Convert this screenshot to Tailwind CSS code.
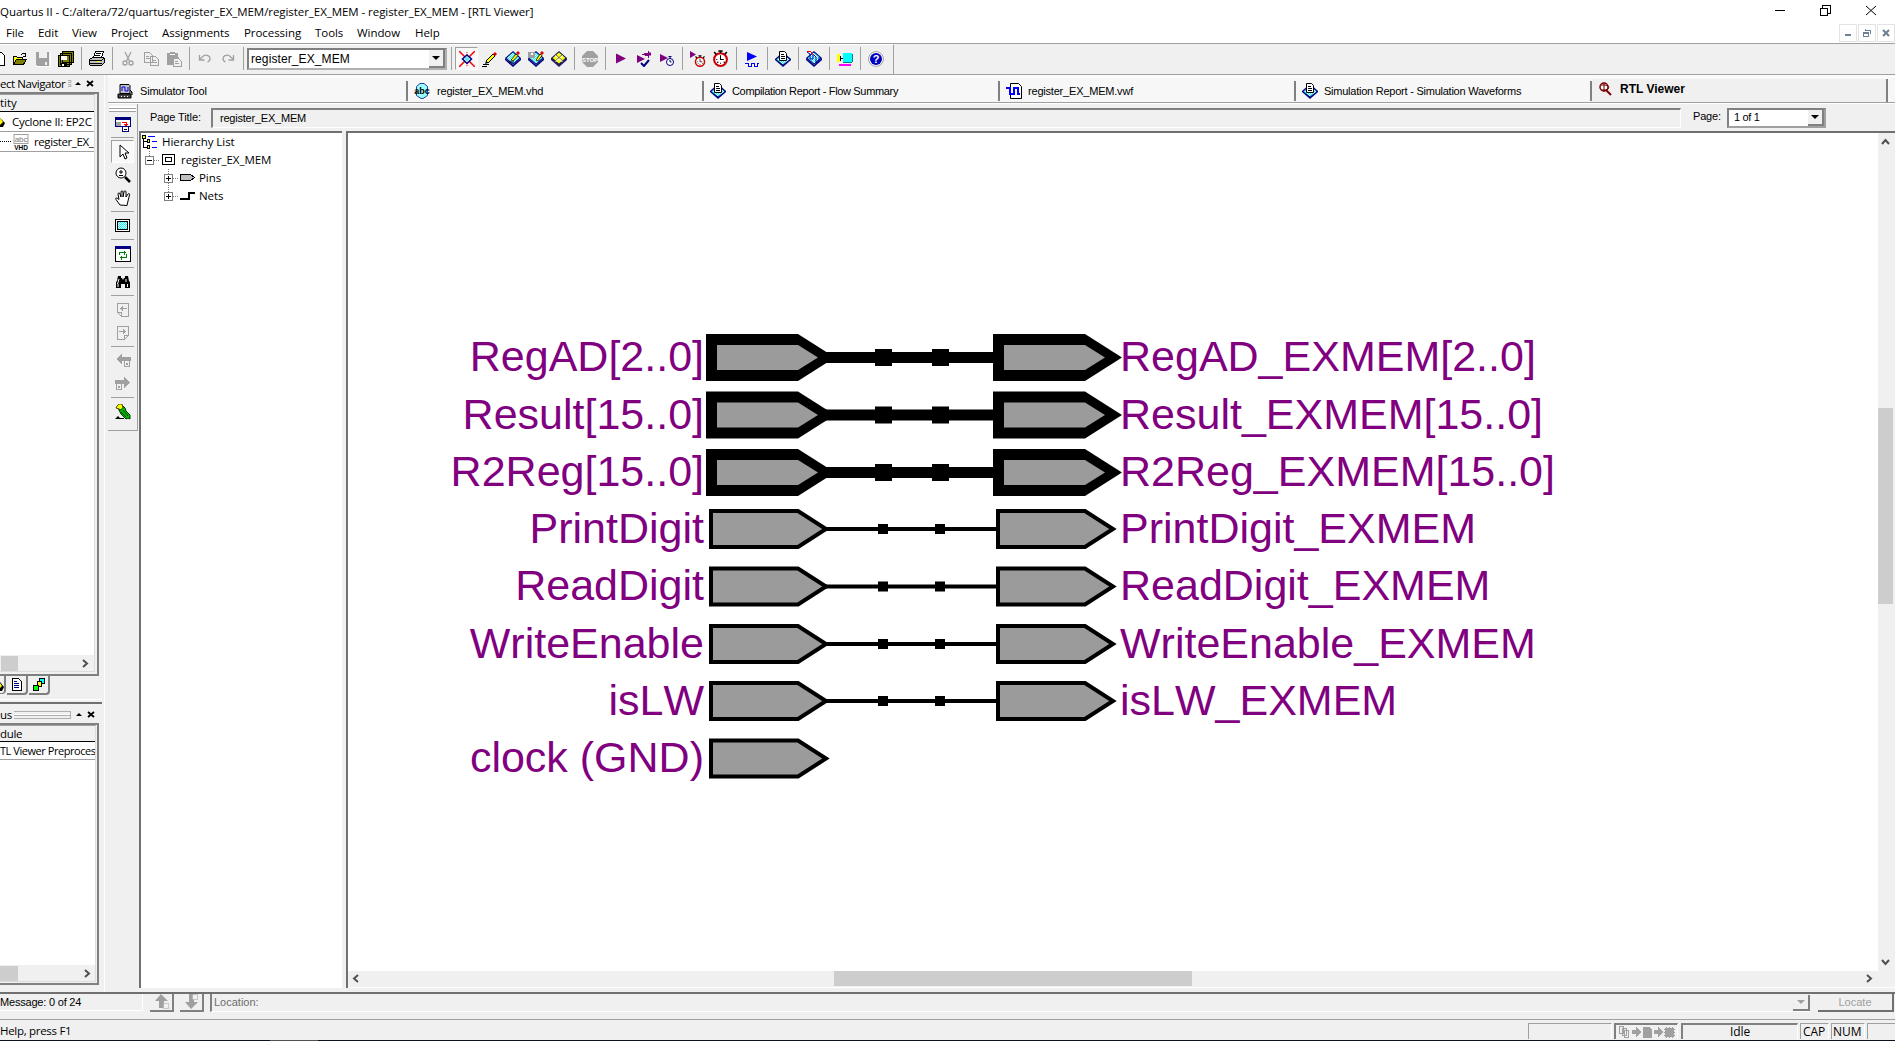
<!DOCTYPE html>
<html lang="en">
<head>
<meta charset="utf-8">
<title>Quartus II - RTL Viewer</title>
<script src="https://cdn.jsdelivr.net/npm/@tailwindcss/browser@4"></script>
</head>
<body class="bg-white">
<svg width="0" height="0" class="absolute">
  <defs>
    <pattern id="dots" width="2" height="2" patternUnits="userSpaceOnUse"><rect width="2" height="2" fill="#fff"/><rect width="1" height="1" fill="#0ff"/><rect x="1" y="1" width="1" height="1" fill="#0ff"/></pattern>
    <symbol id="chip" viewBox="0 0 16 16">
      <path d="M0 7v2l8 7 8-7V7L8 14z" fill="#000080"/><path d="M8 0L16 7 8 14 0 7z" fill="#000080"/><path d="M8 1.500L14.300 7 8 12.600 1.700 7z" fill="url(#dots)"/>
    </symbol>
    <symbol id="report" viewBox="0 0 16 16">
      <path d="M8 1L16 8v1L8 16 0 9V8z" fill="#000080"/><path d="M8 3L14.500 8.500 8 13.500 1.500 8.500z" fill="url(#dots)"/>
      <path d="M4.500 .5h5l2 2v7h-7z" fill="#fff" stroke="#000"/><path d="M6 3.500h3M6 5.500h4M6 7.500h4" stroke="#000"/>
    </symbol>
    <symbol id="clock" viewBox="0 0 16 16">
      <circle cx="8" cy="9" r="6" fill="#fff" stroke="#d00000" stroke-width="2"/><path d="M6 1h4M8 1v2M2 2l2 2M14 2l-2 2" stroke="#000" stroke-width="1.500"/><path d="M8 5v4h3M4 9h1M8 13v-1M12 12l-1-1M5 12l1-1" stroke="#000" fill="none"/>
    </symbol>
  </defs>
</svg>
<div class="w-[1895px] h-[1041px] overflow-hidden flex flex-col bg-[#f0f0f0] text-black font-['Open_Sans',sans-serif] text-[11.5px] tracking-[-0.06px] leading-none whitespace-nowrap">

  <!-- title bar -->
  <div class="h-[23px] bg-white flex items-center justify-between shrink-0">
    <span>Quartus II - C:/altera/72/quartus/register_EX_MEM/register_EX_MEM - register_EX_MEM - [RTL Viewer]</span>
    <svg width="120" height="20" fill="none" stroke="#000" shape-rendering="crispEdges"><path d="M0 8.500h10"/><path d="M45.500 6.500h7v7h-7zM47.500 6v-2.500h7.500v7.500h-2"/><path d="M91 4l10 9M101 4l-10 9" shape-rendering="auto"/></svg>
  </div>

  <!-- menu bar -->
  <div class="h-[20px] bg-white flex items-center justify-between shrink-0">
    <div class="flex items-center pl-[6px]">
      <span class="w-[32px]">File</span><span class="w-[34px]">Edit</span><span class="w-[39px]">View</span><span class="w-[51px]">Project</span><span class="w-[82px]">Assignments</span><span class="w-[71px]">Processing</span><span class="w-[42px]">Tools</span><span class="w-[58px]">Window</span><span class="w-[25px]">Help</span>
    </div>
    <div class="flex gap-px">
      <div class="w-[18px] h-[18px] border border-[#e3e3e3] flex items-center justify-center"><svg width="8" height="8"><rect x="1" y="5" width="6" height="2" fill="#6d7f92"/></svg></div>
      <div class="w-[18px] h-[18px] border border-[#e3e3e3] flex items-center justify-center"><svg width="8" height="8" fill="none" stroke="#6d7f92" shape-rendering="crispEdges"><path d="M2 1h6M2.500 0v2M7.500 1v4M0 3.500h6M.5 3v4.500h5V3"/><path d="M0 4.500h6"/></svg></div>
      <div class="w-[18px] h-[18px] border border-[#e3e3e3] flex items-center justify-center"><svg width="8" height="8"><path d="M1 1l6 6M7 1L1 7" stroke="#6d7f92" stroke-width="2"/></svg></div>
    </div>
  </div>

  <!-- main toolbar -->
  <div class="h-[32px] shrink-0 border-t border-b border-[#a0a0a0] flex items-start">
    <div class="w-[909px] shrink-0 h-full flex items-center border-t border-white border-r border-r-[#a0a0a0] -ml-[15px] pb-[2px]">
      <div class="w-[23px] shrink-0 flex justify-center"><svg width="16" height="16" shape-rendering="crispEdges"><path d="M3.500 1.500h9l3 3v10h-12z" fill="#fff" stroke="#000"/></svg></div>
      <div class="w-[23px] shrink-0 flex justify-center"><svg width="16" height="16" shape-rendering="crispEdges"><path d="M1.500 13.500v-8h3l1 1h5v2" fill="#ff0" stroke="#000"/><path d="M1.500 13.500l3-5h10l-3 5z" fill="#808000" stroke="#000"/><path d="M9 3.500h1M10 2.500h3M13.500 2v4M11 5.500h3" stroke="#000"/></svg></div>
      <div class="w-[23px] shrink-0 flex justify-center"><svg width="16" height="16" shape-rendering="crispEdges"><path d="M1 1h13v14H2l-1-1z" fill="#a0a0a0"/><path d="M4 1h8v6H4zM10 11h2v3h-2z" fill="#f0f0f0"/><path d="M15.500 2v13.500H2" stroke="#fff" fill="none"/></svg></div>
      <div class="w-[23px] shrink-0 flex justify-center"><svg width="16" height="16" shape-rendering="crispEdges" stroke="#000" fill="#808000"><path d="M4.500 .5h11v11h-11zM2.500 2.500h11v11h-11zM.5 4.500h11v11H.5z"/><path d="M3 5h6v4H3z" fill="#fff" stroke="none"/><path d="M3 12h6v3H3z" fill="#000" stroke="none"/><path d="M4 13h2v2H4z" fill="#fff" stroke="none"/></svg></div>
      <div class="w-[8px] shrink-0 h-[23px] flex justify-center"><div class="w-px bg-[#a0a0a0]"></div></div>
      <div class="w-[23px] shrink-0 flex justify-center"><svg width="16" height="16" shape-rendering="crispEdges"><path d="M4.500 6.500l2-6h8l-2 6" fill="#fff" stroke="#000"/><path d="M7 2.500h5M6 4.500h5" stroke="#000"/><path d="M.5 8.500l3-2h11l1 1v4l-3 3h-11l-1-1z" fill="#c0c0c0" stroke="#000"/><path d="M1 9.500h12M1 12h12M13 9l2-2" stroke="#000"/><path d="M8 10.500h3" stroke="#ff0"/></svg></div>
      <div class="w-[8px] shrink-0 h-[23px] flex justify-center"><div class="w-px bg-[#a0a0a0]"></div></div>
      <div class="w-[23px] shrink-0 flex justify-center"><svg width="16" height="16" fill="none" stroke="#a0a0a0" stroke-width="1.300"><path d="M5 1l4.500 9M11 1L6.500 10"/><circle cx="5" cy="12" r="2"/><circle cx="11" cy="12" r="2"/></svg></div>
      <div class="w-[23px] shrink-0 flex justify-center"><svg width="16" height="16" shape-rendering="crispEdges" fill="#f0f0f0" stroke="#a0a0a0"><path d="M1.500 1.500h5l3 3v7h-8zM7.500 5.500h5l3 3v6h-8z"/><path d="M3 5.500h3M3 7.500h4M9 9.500h4M9 11.500h5"/></svg></div>
      <div class="w-[23px] shrink-0 flex justify-center"><svg width="16" height="16" shape-rendering="crispEdges"><path d="M1 2h3V1h5v1h3v4h1v2H7v6H1z" fill="#a0a0a0"/><path d="M7.500 7.500h5l3 3v5h-8z" fill="#f0f0f0" stroke="#a0a0a0"/><path d="M9 10.500h3M9 12.500h4" stroke="#a0a0a0"/><path d="M4 3.500h5" stroke="#fff"/></svg></div>
      <div class="w-[8px] shrink-0 h-[23px] flex justify-center"><div class="w-px bg-[#a0a0a0]"></div></div>
      <div class="w-[23px] shrink-0 flex justify-center"><svg width="16" height="16" fill="none" stroke="#a0a0a0" stroke-width="1.300"><path d="M3 8l4-3.500c3-1 6 .5 6 3 0 2-1 3-2.500 3.500"/><path d="M2.500 4v5h5"/></svg></div>
      <div class="w-[23px] shrink-0 flex justify-center"><svg width="16" height="16" fill="none" stroke="#a0a0a0" stroke-width="1.300"><path d="M13 8L9 4.500c-3-1-6 .5-6 3 0 2 1 3 2.500 3.500"/><path d="M13.500 4v5h-5"/></svg></div>
      <div class="w-[8px] shrink-0 h-[23px] flex justify-center"><div class="w-px bg-[#a0a0a0]"></div></div>
      <div class="w-[200px] shrink-0 h-[22px] bg-white border-2 border-t-[#808080] border-l-[#808080] border-r-[#b0b0b0] border-b-[#b0b0b0] flex items-center justify-between pl-[2px] font-['Liberation_Sans',sans-serif] text-[12px] tracking-[0.1px]">
        <span>register_EX_MEM</span>
        <div class="w-[16px] h-[18px] bg-[#f0f0f0] border-r-2 border-b-2 border-[#808080] flex items-center justify-center"><svg width="8" height="4"><path d="M0 0h8L4 4z"/></svg></div>
      </div>
      <div class="w-[8px] shrink-0 h-[23px] flex justify-center"><div class="w-px bg-[#a0a0a0]"></div></div>
      <div class="w-[23px] shrink-0 h-[23px] bg-[#f9f9f9] border border-t-[#a0a0a0] border-l-[#a0a0a0] border-r-white border-b-white flex items-center justify-center"><svg width="16" height="16"><path d="M0 0l16 16M16 0L0 16" stroke="#f00" stroke-width="1.500"/><path d="M8 1v3M8 12v3" stroke="#f00" stroke-dasharray="1 1"/><path d="M8 4l4.500 4L8 12.500 3.500 8z" fill="#dff" stroke="#000080" stroke-width="1.500"/><path d="M8 5.500L10.500 8 8 10.500 5.500 8z" fill="#6df"/></svg></div>
      <div class="w-[23px] shrink-0 flex justify-center"><svg width="16" height="16"><path d="M4 10L11 3l2 2-7 7z" fill="#ff0" stroke="#000"/><path d="M11 3l2-2 2 2-2 2z" fill="#d00"/><path d="M3 13l1-3 2 2z" fill="#000"/><path d="M1 13.500h6M0 15.500h5" stroke="#000"/></svg></div>
      <div class="w-[23px] shrink-0 flex justify-center"><svg width="16" height="16"><use href="#chip"/><path d="M6 9l5-6 2 1.500L8 10z" fill="#ff0" stroke="#000" stroke-width=".8"/><path d="M11 2l2-2 2 2-2 2z" fill="#d00"/><path d="M4 11h5" stroke="#000"/></svg></div>
      <div class="w-[23px] shrink-0 flex justify-center"><svg width="16" height="16"><use href="#chip"/><path d="M0 1h7v6H0z" fill="#a0a0a0"/><path d="M3 2h2v2H3z" fill="#fff"/><path d="M8 9l4-6 2 1.500L10 10z" fill="#ff0" stroke="#000" stroke-width=".8"/><path d="M12 2l2-2 2 2-2 2z" fill="#d00"/></svg></div>
      <div class="w-[23px] shrink-0 flex justify-center"><svg width="16" height="16"><path d="M0 7v2l8 7 8-7V7L8 0z" fill="#202060"/><path d="M8 1.500L14.300 7 8 12.600 1.700 7z" fill="#ff0"/><path d="M4.500 4.500l7 6M11.500 4.500l-7 6" stroke="#fff" stroke-width="1.500"/><path d="M5 4l7 6M11 4l-7 6" stroke="#404000" stroke-width=".7"/></svg></div>
      <div class="w-[8px] shrink-0 h-[23px] flex justify-center"><div class="w-px bg-[#a0a0a0]"></div></div>
      <div class="w-[23px] shrink-0 flex justify-center"><svg width="16" height="16"><path d="M5 0h6l5 5v6l-5 5H5l-5-5V5z" fill="#a0a0a0"/><text x="8" y="10.500" text-anchor="middle" font-family="Liberation Sans" font-weight="bold" font-size="6" fill="#fff">STOP</text></svg></div>
      <div class="w-[8px] shrink-0 h-[23px] flex justify-center"><div class="w-px bg-[#a0a0a0]"></div></div>
      <div class="w-[23px] shrink-0 flex justify-center"><svg width="16" height="16"><path d="M3 2.500l10 5-10 5z" fill="#800080"/></svg></div>
      <div class="w-[23px] shrink-0 flex justify-center"><svg width="16" height="16"><path d="M1 4l8 4-8 4zM8 2h4V0h1v7h-1V5H9zM12 1.500h3v3h-3zM6 3h3v1H6z" fill="#800080"/><path d="M5 12l3 3 5-6" fill="none" stroke="#000080" stroke-width="2"/></svg></div>
      <div class="w-[23px] shrink-0 flex justify-center"><svg width="16" height="16"><path d="M1 3l8 4-8 4z" fill="#800080"/><circle cx="11" cy="11" r="3.500" fill="#fff" stroke="#000080"/><path d="M11 5v3M9.500 5.500h3M11 9v2h1.500" stroke="#000080" fill="none"/></svg></div>
      <div class="w-[8px] shrink-0 h-[23px] flex justify-center"><div class="w-px bg-[#a0a0a0]"></div></div>
      <div class="w-[23px] shrink-0 flex justify-center"><svg width="16" height="16"><use href="#clock" x="4" y="4" width="12" height="12"/><path d="M0 0l6 3.500L0 7z" fill="#800080"/></svg></div>
      <div class="w-[23px] shrink-0 flex justify-center"><svg width="17" height="17"><use href="#clock" width="17" height="17"/></svg></div>
      <div class="w-[8px] shrink-0 h-[23px] flex justify-center"><div class="w-px bg-[#a0a0a0]"></div></div>
      <div class="w-[23px] shrink-0 flex justify-center"><svg width="16" height="16"><path d="M3 1l10 4.500-10 4.500z" fill="#00f"/><path d="M1 12.500h3v3h3v-3h3v3h3v-3h2" fill="none" stroke="#00f" shape-rendering="crispEdges"/></svg></div>
      <div class="w-[8px] shrink-0 h-[23px] flex justify-center"><div class="w-px bg-[#a0a0a0]"></div></div>
      <div class="w-[23px] shrink-0 flex justify-center"><svg width="16" height="16"><use href="#report"/></svg></div>
      <div class="w-[8px] shrink-0 h-[23px] flex justify-center"><div class="w-px bg-[#a0a0a0]"></div></div>
      <div class="w-[23px] shrink-0 flex justify-center"><svg width="16" height="16"><use href="#chip"/><path d="M1 1l3 2v5h3V3l3 3v5h3V6" fill="none" stroke="#00a"/><path d="M1 .5h4M5 1l3 3" stroke="#f00"/></svg></div>
      <div class="w-[8px] shrink-0 h-[23px] flex justify-center"><div class="w-px bg-[#a0a0a0]"></div></div>
      <div class="w-[23px] shrink-0 flex justify-center"><svg width="16" height="16" shape-rendering="crispEdges"><path d="M0 3h3v8H0z" fill="#ff0"/><path d="M3 5h1v2h2v1H4v2H3z" fill="#000"/><path d="M6 2h9v9H6z" fill="#0ff"/><path d="M6 11h9v1H6zM15 3h1v8h-1z" fill="#008080"/><path d="M2 13h12v2H2z" fill="#f0f"/></svg></div>
      <div class="w-[8px] shrink-0 h-[23px] flex justify-center"><div class="w-px bg-[#a0a0a0]"></div></div>
      <div class="w-[23px] shrink-0 flex justify-center"><svg width="16" height="16"><circle cx="8" cy="8" r="7.400" fill="#fff" stroke="#a0a0a0"/><circle cx="8" cy="8" r="6" fill="#0000c0"/><text x="8" y="12" text-anchor="middle" font-family="Liberation Sans" font-weight="bold" font-size="11" fill="#fff">?</text></svg></div>
    </div>
  </div>

  <!-- work area -->
  <div class="h-[917px] shrink-0 flex overflow-hidden">
    <!-- docked panes -->
    <div class="w-[104px] shrink-0 flex flex-col">
      <div class="h-[17px] flex items-center">
        <div class="w-[63px] tracking-[-0.45px]">ect Navigator</div>
        <svg width="34" height="9" class="ml-[4px] shrink-0"><path d="M1 1.500h3v2H1M1 5.500h3v2H1" stroke="#b0b0b0" fill="none"/><path d="M8 6h6L11 3z"/><path d="M20 2l6 5M26 2l-6 5" stroke="#000" stroke-width="1.800"/></svg>
      </div>
      <div class="h-[584px] w-[99px] border-t-2 border-r-2 border-b-2 border-[#808080] flex flex-col pr-[2px] pb-[2px]">
        <div class="h-full border-r border-b border-t border-t-[#a0a0a0] border-[#dcdcdc] bg-white flex flex-col overflow-hidden">
          <div class="h-[17px] bg-[#f0f0f0] border-b border-black flex items-center shrink-0">tity</div>
          <div class="h-[20px] border-b border-[#a0a0a0] flex items-center shrink-0"><svg width="6" height="14" class="mr-[6px] shrink-0"><path d="M0 3l5 5-2 4H0z" fill="#000"/><path d="M0 3l3 4-3 3z" fill="#ff0"/></svg><span class="tracking-[-0.3px]">Cyclone II: EP2C</span></div>
          <div class="h-[20px] border-b border-[#a0a0a0] flex items-center shrink-0"><div class="w-[11px] shrink-0 border-t border-dotted border-black mr-[2px]"></div><svg width="16" height="16" class="mr-[5px] shrink-0"><rect x="1" y=".5" width="14" height="9" fill="#fff" stroke="#a0a0a0"/><text x="8" y="8" text-anchor="middle" font-family="Liberation Sans" font-size="8" fill="#777">abc</text><text x="8" y="16" text-anchor="middle" font-family="Liberation Sans" font-weight="bold" font-size="6.500">VHD</text></svg><span class="tracking-[-0.4px]">register_EX_</span></div>
          <div class="grow"></div>
          <div class="h-[16px] shrink-0 bg-[#f0f0f0] flex items-center"><div class="w-[17px] h-[15px] ml-px bg-[#cdcdcd]"></div><svg width="8" height="9" class="ml-[64px]"><path d="M1 1l4 3.500L1 8" fill="none" stroke="#505050" stroke-width="2"/></svg></div>
        </div>
      </div>
      <div class="h-[19px] flex items-start gap-px">
        <div class="w-[6px] h-[18px] border-r-2 border-b border-[#808080] rounded-br-sm flex items-end"><svg width="5" height="14"><path d="M0 3l4 5-2 4H0z"/><path d="M0 4l2 3-2 2z" fill="#ff0"/></svg></div>
        <div class="w-[21px] h-[19px] border-r-2 border-b-2 border-[#808080] rounded-br-sm flex items-center justify-center"><svg width="12" height="13" shape-rendering="crispEdges"><path d="M1.500 .5h6l3 3v9h-9z" fill="#fff" stroke="#000"/><path d="M3 3.500h3M3 5.500h5M3 7.500h5M3 9.500h5" stroke="#000080"/></svg></div>
        <div class="w-[21px] h-[19px] border-r-2 border-b-2 border-[#808080] rounded-br-sm flex items-center justify-center"><svg width="12" height="13" shape-rendering="crispEdges" stroke="#000"><path d="M6.500 .5h5v5h-5z" fill="#0ff"/><path d="M4.500 3.500h4v5h-4z" fill="#ff0"/><path d="M.5 7.500h5v5h-5z" fill="#0f0"/></svg></div>
      </div>
      <div class="h-[9px] w-[102px] border-b-2 border-[#707070] mb-[2px]"><div class="mt-[4px] h-px bg-white"></div></div>
      <div class="h-[17px] flex items-center">
        <div class="w-[12px] tracking-[-0.3px]">us</div>
        <div class="w-[57px] h-[8px] ml-[2px] border-t border-b border-r border-[#b0b0b0] flex items-center"><div class="w-full h-[2px] bg-white border-b border-[#b0b0b0]"></div></div>
        <svg width="28" height="9" class="ml-[3px]"><path d="M2 6h6L5 3z"/><path d="M14 2l6 5M20 2l-6 5" stroke="#000" stroke-width="1.800"/></svg>
      </div>
      <div class="h-[262px] w-[99px] border-t-2 border-r-2 border-b-2 border-[#808080] pr-px pb-px">
        <div class="h-full border-r border-b border-t border-t-[#a0a0a0] border-[#dcdcdc] bg-white flex flex-col overflow-hidden">
          <div class="h-[16px] shrink-0 bg-[#f0f0f0] border-b border-black flex items-center tracking-[-0.3px]">dule</div>
          <div class="h-[18px] shrink-0 border-b border-[#a0a0a0] flex items-center text-[11px] tracking-[-0.45px]">TL Viewer Preproces</div>
          <div class="grow"></div>
          <div class="h-[16px] shrink-0 bg-[#f0f0f0] flex items-center"><div class="w-[18px] h-[15px] bg-[#cdcdcd]"></div><svg width="8" height="9" class="ml-[66px]"><path d="M1 1l4 3.500L1 8" fill="none" stroke="#505050" stroke-width="2"/></svg></div>
        </div>
      </div>
    </div>

    <!-- MDI area -->
    <div class="w-[1791px] shrink-0 flex flex-col border-l border-white pl-[3px] font-['Liberation_Sans',sans-serif] text-[11px] tracking-[-0.2px]">
      <div class="h-[28px] shrink-0 border-b border-[#a0a0a0] bg-[#f7f7f7] flex items-end pl-[5px] border-t-[3px] border-t-[#fbfbfb]">
        <div class="w-[295px] shrink-0 h-[20px] mb-px border-r-2 border-[#808080] flex items-center pl-[4px]"><svg width="16" height="16" class="mr-[7px]"><path d="M3 1.500h9l1 1v8H3z" fill="#c0c0c0" stroke="#000"/><path d="M5 8V4h3v4h3V4" fill="none" stroke="#00f"/><path d="M1 11h13v4H1zM13 7l2 2v3" fill="#444" stroke="#000"/><path d="M4 13.500h1M7 13.500h1M10 13.500h1" stroke="#fff"/></svg><span>Simulator Tool</span></div>
        <div class="w-[296px] shrink-0 h-[20px] mb-px border-r-2 border-[#808080] flex items-center pl-[6px]"><svg width="16" height="16" class="mr-[7px]"><path d="M6 .5h4l3.500 3v9L9 15.500H7L2.500 12.500v-9z" fill="#9ff" stroke="#2040a0"/><text x="8" y="10.500" text-anchor="middle" font-family="Liberation Sans" font-size="9" font-weight="bold" letter-spacing="0">abc</text></svg><span>register_EX_MEM.vhd</span></div>
        <div class="w-[296px] shrink-0 h-[20px] mb-px border-r-2 border-[#808080] flex items-center pl-[6px]"><svg width="16" height="16" class="mr-[6px]"><use href="#report"/></svg><span class="tracking-[-0.34px]">Compilation Report - Flow Summary</span></div>
        <div class="w-[296px] shrink-0 h-[20px] mb-px border-r-2 border-[#808080] flex items-center pl-[6px]"><svg width="16" height="16" class="mr-[6px]"><path d="M4.500 .5h8l3 3v12h-11z" fill="#fff" stroke="#000"/><path d="M0 5h4v6h4V5h4v6h2" fill="none" stroke="#00f" stroke-width="2"/></svg><span>register_EX_MEM.vwf</span></div>
        <div class="w-[296px] shrink-0 h-[20px] mb-px border-r-2 border-[#808080] flex items-center pl-[6px]"><svg width="16" height="16" class="mr-[6px]"><use href="#report"/></svg><span class="tracking-[-0.24px]">Simulation Report - Simulation Waveforms</span></div>
        <div class="w-[296px] shrink-0 h-[23px] bg-[#f0f0f0] border-r-2 border-[#808080] flex items-start pt-[3px] pl-[6px] text-[12px] tracking-normal font-bold"><svg width="14" height="14" class="mr-[8px]"><circle cx="6" cy="5" r="4" fill="#fff" stroke="#800000" stroke-width="1.500"/><path d="M8 8l5 5" stroke="#800000" stroke-width="2"/><path d="M3 3h4a3 2 0 010 5H3M6 1v9" stroke="#600" fill="none"/></svg><span class="pt-px">RTL Viewer</span></div>
      </div>
      <div class="h-[889px] flex border-t border-white">
        <!-- tool strip -->
        <div class="w-[31px] shrink-0 flex flex-col">
          <div class="h-[327px] w-[30px] border-r border-b border-[#a0a0a0] flex flex-col items-center">
            <div class="w-[27px] h-[3px] mt-[2px] border-b border-[#a0a0a0] bg-white"></div><div class="w-[27px] h-[3px] border-b border-[#a0a0a0] bg-white"></div>
            <div class="h-[23px] flex items-center"><svg width="16" height="16" shape-rendering="crispEdges"><path d="M.5 1.500h15v9H.5z" fill="#fff" stroke="#000080"/><path d="M0 1h16v3H0z" fill="#000080"/><path d="M1 6h5v4H1z" fill="#a0a0a0"/><path d="M7 6.500h4v3M9 8.500h4M10 9.500h2" stroke="#f00" fill="none"/><path d="M7.500 10.500h6v5h-6z" fill="#fff" stroke="#000080"/><path d="M9 13h3" stroke="#000"/></svg></div>
            <div class="h-[5px] w-[23px] pt-[2px]"><div class="h-px bg-[#a0a0a0]"></div></div>
            <div class="h-[23px] w-[23px] bg-[#f9f9f9] border border-t-[#a0a0a0] border-l-[#a0a0a0] border-r-white border-b-white flex items-center justify-center"><svg width="12" height="16"><path d="M3 1v12l3-3 2 5 2-1-2-5h4z" fill="#fff" stroke="#000"/></svg></div>
            <div class="h-[23px] flex items-center"><svg width="16" height="16"><circle cx="6" cy="6" r="5" fill="#fff" stroke="#000"/><path d="M6 3v4M4 5h4M4 8.500h4" stroke="#000"/><path d="M10 10l5 5" stroke="#000" stroke-width="2.500"/></svg></div>
            <div class="h-[23px] flex items-center"><svg width="16" height="16"><path d="M5 15L1 9.500c-1-2 1-2 3 0L3 4c0-1.500 2-1.500 2 0l1 3V2c0-1.500 2-1.500 2 0v5l1-5c0-1.500 2-1.500 2 0v5l2-3c1-1 2 0 1.500 1L13 11l-1 4.500z" fill="#fff" stroke="#000"/></svg></div>
            <div class="h-[5px] w-[23px] pt-[2px]"><div class="h-px bg-[#a0a0a0]"></div></div>
            <div class="h-[23px] flex items-center"><svg width="16" height="14" shape-rendering="crispEdges"><path d="M.5 .5h14v12H.5z" fill="#fff" stroke="#000"/><path d="M3 3h9v7H3z" fill="url(#dots)"/><path d="M2.500 2.500h10v8h-10z" fill="none" stroke="#000"/></svg></div>
            <div class="h-[5px] w-[23px] pt-[2px]"><div class="h-px bg-[#a0a0a0]"></div></div>
            <div class="h-[23px] flex items-center"><svg width="16" height="16" shape-rendering="crispEdges"><path d="M.5 .5h15v15H.5z" fill="#fff" stroke="#000"/><path d="M0 0h16v3H0z" fill="#000080"/><path d="M4.500 9V6.500h6M9.500 4.500v4M11.500 8v3.500H5M6.500 9.500v4" fill="none" stroke="#008000"/></svg></div>
            <div class="h-[5px] w-[23px] pt-[2px]"><div class="h-px bg-[#a0a0a0]"></div></div>
            <div class="h-[23px] flex items-center"><svg width="16" height="14"><path d="M3 1h3v2h1l1 2 1-2h1V1h3l1 5 1 1v6h-5V9H6v4H1V7l1-1z"/><path d="M4 4L2.500 9M11 4v3M12.500 9v3M3 9v3" stroke="#fff"/></svg></div>
            <div class="h-[5px] w-[23px] pt-[2px]"><div class="h-px bg-[#a0a0a0]"></div></div>
            <div class="h-[23px] flex items-center"><svg width="14" height="16" fill="none" stroke="#a0a0a0" shape-rendering="crispEdges"><path d="M1.500 8v-6.500h11v13h-7l-4-4h4v4M1.500 8v3"/><path d="M4 6.500h7M6.500 4v5M5.500 5v3"/></svg></div>
            <div class="h-[23px] flex items-center"><svg width="14" height="16" fill="none" stroke="#a0a0a0" shape-rendering="crispEdges"><path d="M12.500 11v-9.500h-11v13h7l4-4h-4v4"/><path d="M3 6.500h7M7.500 4v5M8.500 5v3"/></svg></div>
            <div class="h-[5px] w-[23px] pt-[2px]"><div class="h-px bg-[#a0a0a0]"></div></div>
            <div class="h-[23px] flex items-center"><svg width="16" height="16" shape-rendering="crispEdges"><path d="M1 6l6-5v3h9v4H7v4z" fill="#a0a0a0"/><path d="M9.500 7.500h5v6h-5z" fill="#f0f0f0" stroke="#a0a0a0"/><path d="M11 10h2v2h-2z" fill="#a0a0a0"/></svg></div>
            <div class="h-[23px] flex items-center"><svg width="16" height="16" shape-rendering="crispEdges"><path d="M15 6L9 1v3H0v4h9v4z" fill="#a0a0a0"/><path d="M1.500 7.500h5v6h-5z" fill="#f0f0f0" stroke="#a0a0a0"/><path d="M3 10h2v2H3z" fill="#a0a0a0"/></svg></div>
            <div class="h-[5px] w-[23px] pt-[2px]"><div class="h-px bg-[#a0a0a0]"></div></div>
            <div class="h-[23px] flex items-center"><svg width="16" height="16"><path d="M3 2h5l2 2 1 3 4 4v4l-2-1-2 1-5-5-2-4z" fill="#00c000" stroke="#003000"/><path d="M2 2l2-2h3l1 3-2 3-2-1-3-1z" fill="#ff0" stroke="#000" stroke-width=".7"/><path d="M8 6l5 6M6 8l5 5" stroke="#003000"/><path d="M0 15l3-3 3 3zM5 14h4v1H5z"/></svg></div>
          </div>
        </div>
        <div class="w-[1756px] flex flex-col">
          <!-- page title row -->
          <div class="h-[27px] flex items-center pl-[11px]">
            <span class="w-[61px] shrink-0 tracking-[-0.1px]">Page Title:</span>
            <div class="w-[1470px] shrink-0 h-[20px] border-t-2 border-l-2 border-[#808080] border-r border-b border-r-white border-b-white flex items-center pl-[7px]"><span class="tracking-[-0.22px]">register_EX_MEM</span></div>
            <span class="w-[34px] ml-[12px] pb-[2px]">Page:</span>
            <div class="w-[99px] h-[20px] bg-white border-2 border-t-[#808080] border-l-[#808080] border-r-[#a0a0a0] border-b-[#a0a0a0] flex items-center justify-between pl-[5px]"><span class="tracking-[-0.35px]">1 of 1</span><div class="w-[16px] h-[16px] bg-[#f0f0f0] border-r-2 border-b-2 border-[#808080] flex items-center justify-center"><svg width="8" height="4"><path d="M0 0h8L4 4z"/></svg></div></div>
          </div>
          <div class="h-[857px] flex">
            <!-- hierarchy tree -->
            <div class="w-[203px] h-full bg-white border-t-2 border-l-2 border-[#707070] pl-px font-['Open_Sans',sans-serif] text-[11.5px] tracking-[-0.06px]">
              <div class="h-[18px] flex items-center"><svg width="16" height="14" shape-rendering="crispEdges" class="mr-[4px]"><path d="M1.500 1v11h4M1.500 6.500h4M0 2.500h3" fill="none" stroke="#000"/><path d="M.5 .5h3v3h-3zM5.500 4.500h2v3h-2zM5.500 10.500h2v3h-2z" fill="#ff0" stroke="#000"/><path d="M6 1.500h7M10 6.500h5M10 12.500h5" stroke="#00f"/></svg><span>Hierarchy List</span></div>
              <div class="h-[18px] flex items-center pl-[3px]"><svg width="30" height="18" shape-rendering="crispEdges" class="mr-[6px]"><path d="M4.500 0v5M9 9.500h6" stroke="#808080" stroke-dasharray="1 1"/><path d="M.5 5.500h8v8h-8z" fill="#fff" stroke="#808080"/><path d="M2 9.500h5" stroke="#000"/><path d="M17.500 3.500h12v10h-12zM20.500 6.500h6v4h-6z" fill="#fff" stroke="#000"/></svg><span>register_EX_MEM</span></div>
              <div class="h-[18px] flex items-center pl-[22px]"><svg width="32" height="18" shape-rendering="crispEdges" class="mr-[3px]"><path d="M4.500 0v5M4.500 14v4M9 9.500h6" stroke="#808080" stroke-dasharray="1 1"/><path d="M.5 5.500h8v8h-8z" fill="#fff" stroke="#808080"/><path d="M2 9.500h5M4.500 7v5" stroke="#000"/><path d="M16.500 5.500h10l4 3-4 3h-10z" fill="#c0c0c0" stroke="#000"/></svg><span>Pins</span></div>
              <div class="h-[18px] flex items-center pl-[22px]"><svg width="32" height="18" shape-rendering="crispEdges" class="mr-[3px]"><path d="M4.500 0v5M9 9.500h6" stroke="#808080" stroke-dasharray="1 1"/><path d="M.5 5.500h8v8h-8z" fill="#fff" stroke="#808080"/><path d="M2 9.500h5M4.500 7v5" stroke="#000"/><path d="M16 12h9V6h6" fill="none" stroke="#000" stroke-width="2"/></svg><span>Nets</span></div>
            </div>
            <!-- schematic -->
            <div class="w-[1549px] h-full ml-[4px] border-t-2 border-l-2 border-[#707070] flex flex-col">
              <div class="h-[838px] flex">
                <svg id="sch" width="1530" height="838" viewBox="348 133 1530 838" class="bg-white shrink-0 tracking-normal [font-kerning:none]" font-family="Liberation Sans, Arial, sans-serif" font-size="43" fill="#800080"></svg>
                <div class="w-[17px] bg-[#f0f0f0] flex flex-col py-[5px]">
                  <svg width="9" height="8" class="ml-[3px]"><path d="M1 6l3.500-4L8 6" fill="none" stroke="#505050" stroke-width="2"/></svg>
                  <div class="w-[15px] h-[196px] bg-[#cdcdcd] mt-[262px]"></div>
                  <svg width="9" height="8" class="mt-auto ml-[3px]"><path d="M1 2l3.500 4L8 2" fill="none" stroke="#505050" stroke-width="2"/></svg>
                </div>
              </div>
              <div class="h-[17px] flex items-start pl-[4px] pr-[22px] border-b border-white">
                <svg width="8" height="9" class="mt-[3px]"><path d="M6 1L2 4.500 6 8" fill="none" stroke="#505050" stroke-width="2"/></svg>
                <div class="w-[358px] h-[15px] bg-[#cdcdcd] ml-[474px]"></div>
                <svg width="8" height="9" class="ml-auto mt-[3px]"><path d="M2 1l4 3.500L2 8" fill="none" stroke="#505050" stroke-width="2"/></svg>
              </div>
            </div>
          </div>
        </div>
      </div>
    </div>
  </div>

  <!-- message bar -->
  <div class="h-[28px] shrink-0 border-t-2 border-[#707070] border-b border-b-[#a0a0a0] flex items-start font-['Liberation_Sans',sans-serif] text-[11px] tracking-normal">
    <div class="w-[143px] h-[17px] border-r border-b border-white flex items-center tracking-[-0.2px]">Message: 0 of 24</div>
    <div class="w-[24px] h-[18px] ml-[7px] border-r-2 border-b-2 border-[#808080] flex items-center justify-center"><svg width="16" height="16" class="ml-px"><path d="M7 0l7 7h-4v7H5V7H1z" fill="#a0a0a0"/><path d="M9.500 9.500h5v5h-5z" fill="#f0f0f0" stroke="#a0a0a0" stroke-dasharray="1 1"/></svg></div>
    <div class="w-[24px] h-[18px] ml-[6px] border-r-2 border-b-2 border-[#808080] flex items-center justify-center"><svg width="16" height="16" class="ml-px"><path d="M7 15l7-7h-4V0H5v8H1z" fill="#a0a0a0"/><path d="M8.500 .5h5v5h-5z" fill="#f0f0f0" stroke="#a0a0a0" stroke-dasharray="1 1"/></svg></div>
    <div class="w-[1600px] h-[18px] ml-[6px] border-l-2 border-l-[#808080] border-b border-white flex items-center justify-between pl-[2px] text-[#6d6d6d]"><span>Location:</span><div class="w-[17px] h-[16px] border-r-2 border-b-2 border-[#808080] flex items-center justify-center"><svg width="8" height="4"><path d="M0 0h8L4 4z" fill="#a0a0a0"/></svg></div></div>
    <div class="w-[76px] h-[18px] ml-[8px] border-r-2 border-b-2 border-[#707070] flex items-center justify-center text-[#a0a0a0]">Locate</div>
  </div>

  <!-- status bar -->
  <div class="h-[20px] shrink-0 flex items-center pt-[2px]">
    <div class="w-[1528px] shrink-0 tracking-[-0.3px]">Help, press F1</div>
    <div class="w-[84px] h-[16px] border-t border-l border-[#a0a0a0] border-r border-r-white"></div>
    <div class="w-[64px] h-[16px] ml-[2px] border-t-2 border-l-2 border-[#808080] border-r border-r-white flex items-center pl-[3px]"><svg width="56" height="12" fill="#a0a0a0" shape-rendering="crispEdges"><path d="M.5 .5h4v7h-4zM3.500 2.500h4v7h-4zM5.500 4.500h4v7h-4z" fill="#f0f0f0" stroke="#a0a0a0"/><path d="M13 4h4V1l5 5-5 5V8h-4zM24 1h6l3 3v8h-9zM35 4h4V1l5 5-5 5V8h-4zM46 2h9v9h-9z"/><path d="M45 3.500h11M45 6.500h11M45 9.500h11M47.500 1v11M50.500 1v11M53.500 1v11" stroke="#a0a0a0"/></svg></div>
    <div class="w-[117px] h-[16px] ml-[3px] border-t-2 border-l-2 border-[#808080] border-r border-r-white flex items-center justify-center text-[12px]">Idle</div>
    <div class="w-[29px] h-[16px] ml-[2px] border-t border-l border-[#a0a0a0] border-r border-r-white flex items-center pl-[2px] text-[12px]">CAP</div>
    <div class="w-[34px] h-[16px] ml-[2px] border-t border-l border-[#a0a0a0] border-r border-r-white flex items-center pl-px text-[12px]">NUM</div>
    <div class="grow h-[16px] ml-[2px] border-t border-l border-[#a0a0a0]"></div>
  </div>
  <div class="h-px shrink-0 bg-[#0c1220] flex"><div class="w-[48px] ml-[270px] bg-[#505050]"></div></div>
</div>
<script>
  // [input pin, output pin, centre line, is bus]
  const rows = [
    ['RegAD[2..0]', 'RegAD_EXMEM[2..0]', 357.5, 1], ['Result[15..0]', 'Result_EXMEM[15..0]', 415, 1], ['R2Reg[15..0]', 'R2Reg_EXMEM[15..0]', 472.5, 1],
    ['PrintDigit', 'PrintDigit_EXMEM', 529, 0], ['ReadDigit', 'ReadDigit_EXMEM', 586.5, 0], ['WriteEnable', 'WriteEnable_EXMEM', 644, 0], ['isLW', 'isLW_EXMEM', 701, 0], ['clock (GND)', '', 758.5, 0]
  ];
  const pin = (x, y, bus) => bus
    ? `<path d="M${x} ${y-23.5}h92l37 23.500-37 23.500h-92z" fill="#000"/><path d="M${x+11} ${y-12.5}h81l20 12.500-20 12.500h-81z" fill="#9b9b9b"/>`
    : `<path d="M${x+5} ${y-18}h87l28 18-28 18h-87z" fill="#9b9b9b" stroke="#000" stroke-width="4"/>`;
  document.getElementById('sch').innerHTML = rows.map(([a, b, y, bus]) => {
    let s = pin(706, y, bus);
    if (b) {
      s += bus ? `<path d="M822 ${y-5.5}h175v11h-175zM875 ${y-8.5}h17v17h-17zM932 ${y-8.5}h17v17h-17z" fill="#000"/>`
               : `<path d="M826 ${y-2}h172v4h-172zM878 ${y-5}h10v10h-10zM935 ${y-5}h10v10h-10z" fill="#000"/>`;
      s += pin(993, y, bus) + `<text x="1120" y="${y+13.7}">${b}</text>`;
    }
    return s + `<text x="704" y="${y+13.7}" text-anchor="end">${a}</text>`;
  }).join('');
</script>
</body>
</html>
